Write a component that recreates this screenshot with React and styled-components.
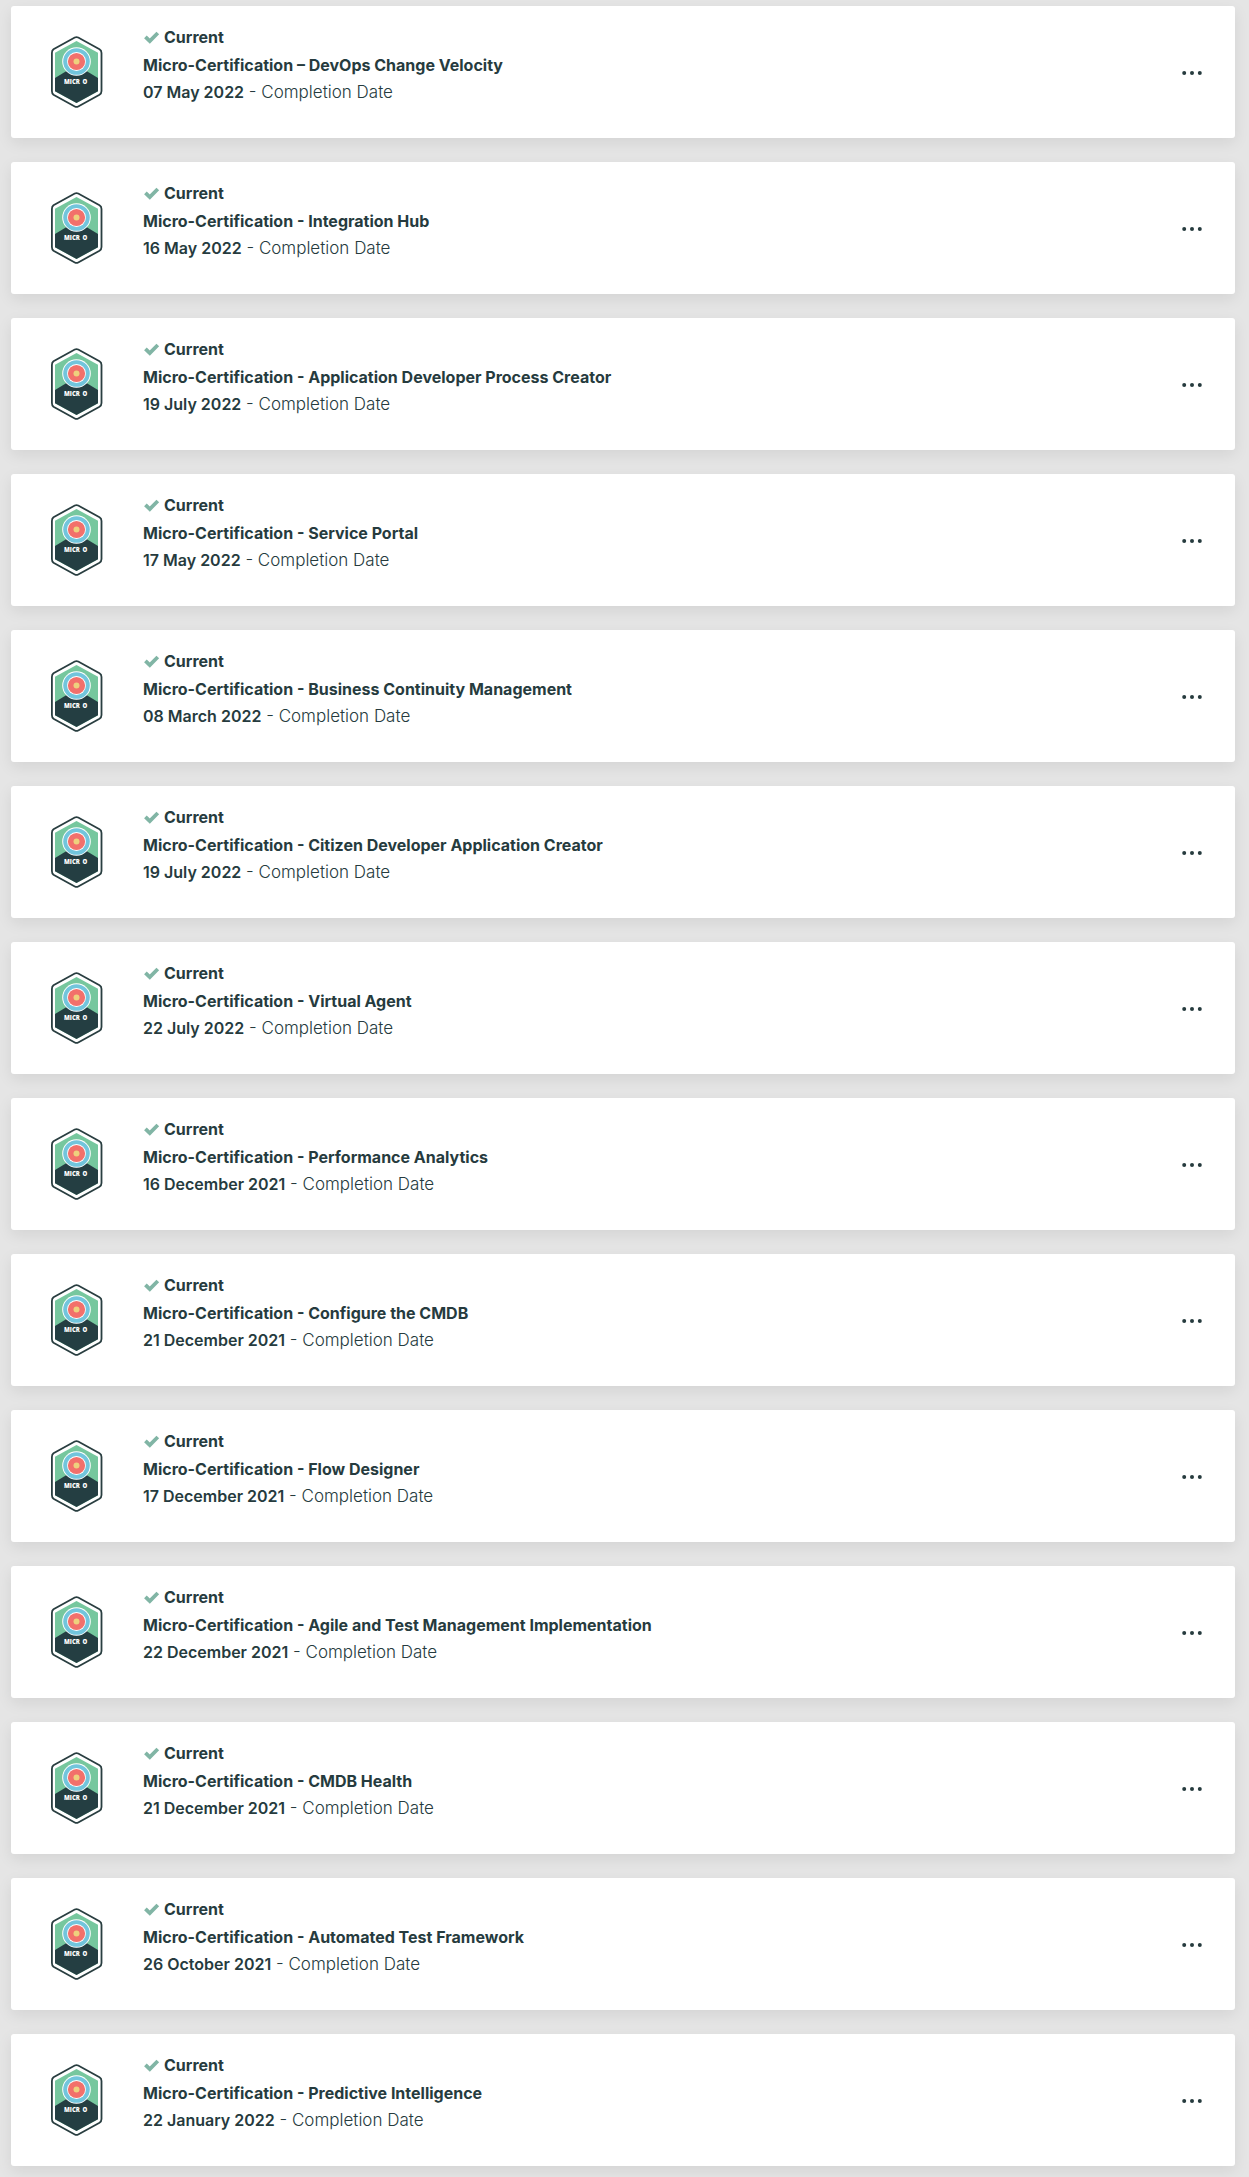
import React from "react";
import styled, { createGlobalStyle } from "styled-components";

const GlobalStyle = createGlobalStyle`
  *, *::before, *::after { box-sizing: border-box; }
  body {
    margin: 0;
    background: #e5e5e5;
    color: #263b3e;
    font-family: Inter, "Liberation Sans", sans-serif;
  }
`;

const List = styled.ul`
  display: flex;
  flex-direction: column;
  gap: 24px;
  margin: 0;
  padding: 6px 14px 11px 11px;
  list-style: none;
`;

const Card = styled.li`
  display: flex;
  align-items: center;
  gap: 40px;
  min-height: 132px;
  padding: 18px 28px 18px 40px;
  border-radius: 3px;
  background: #ffffff;
  box-shadow: 0 5px 15px rgba(0, 0, 0, 0.08);
`;

const BadgeArt = styled.svg`
  flex: none;
  width: 52px;
  height: 72px;
`;

const Details = styled.div`
  display: flex;
  flex: 1;
  flex-direction: column;
  align-self: flex-start;
  min-width: 0;
  font-size: 16px;
  line-height: 27px;
`;

const Status = styled.div`
  display: flex;
  align-items: flex-start;
  gap: 4px;
  height: 28px;
  font-weight: 700;
`;

const CheckMark = styled.svg`
  flex: none;
  width: 17px;
  height: 27px;
`;

const Title = styled.h3`
  margin: 0;
  font-size: 16px;
  font-weight: 700;
`;

const Completion = styled.p`
  margin: 0;
  font-size: 17px;
  font-weight: 300;
`;

const CompletedOn = styled.time`
  font-size: 16px;
  font-weight: 600;
`;

const MenuButton = styled.button`
  display: flex;
  flex: none;
  align-items: flex-end;
  justify-content: center;
  width: 30px;
  height: 30px;
  padding: 0 0 12px;
  border: 0;
  background: transparent;
  color: #263b3e;
  cursor: pointer;
`;

const certifications = [
  { title: "Micro-Certification – DevOps Change Velocity", date: "07 May 2022" },
  { title: "Micro-Certification - Integration Hub", date: "16 May 2022" },
  { title: "Micro-Certification - Application Developer Process Creator", date: "19 July 2022" },
  { title: "Micro-Certification - Service Portal", date: "17 May 2022" },
  { title: "Micro-Certification - Business Continuity Management", date: "08 March 2022" },
  { title: "Micro-Certification - Citizen Developer Application Creator", date: "19 July 2022" },
  { title: "Micro-Certification - Virtual Agent", date: "22 July 2022" },
  { title: "Micro-Certification - Performance Analytics", date: "16 December 2021" },
  { title: "Micro-Certification - Configure the CMDB", date: "21 December 2021" },
  { title: "Micro-Certification - Flow Designer", date: "17 December 2021" },
  { title: "Micro-Certification - Agile and Test Management Implementation", date: "22 December 2021" },
  { title: "Micro-Certification - CMDB Health", date: "21 December 2021" },
  { title: "Micro-Certification - Automated Test Framework", date: "26 October 2021" },
  { title: "Micro-Certification - Predictive Intelligence", date: "22 January 2022" },
];

function Badge() {
  return (
    <BadgeArt viewBox="0 0 52 72" aria-hidden="true">
      <path
        d="M23.8 1.5Q25.5 .6 27.2 1.5L48.5 13.3Q50.5 14.5 50.5 17V55Q50.5 57.5 48.5 58.7L27.2 70.5Q25.5 71.4 23.8 70.5L2.5 58.7Q.9 57.5 .9 55V17Q.9 14.5 2.5 13.3Z"
        fill="#ffffff"
        stroke="#293e40"
        strokeWidth="1.8"
      />
      <path d="M25.5 5L47 16.8V55.2L25.5 67L4 55.2V16.8Z" fill="#76c79e" />
      <path d="M4 42L25.5 29L47 42V55.2L25.5 67L4 55.2Z" fill="#243e42" />
      <circle cx="25.5" cy="25.5" r="14.3" fill="#ffffff" />
      <circle cx="25.5" cy="25.5" r="13.3" fill="#72c5dc" />
      <circle cx="25.5" cy="25.5" r="9.4" fill="#ffffff" />
      <circle cx="25.5" cy="25.5" r="8.6" fill="#f2706b" />
      <circle cx="25.5" cy="25.5" r="3" fill="#eed17d" />
      <g fill="#ffffff" fontFamily="Open Sans, sans-serif" fontSize="6" fontWeight="800">
        <text x="13" y="48">MICR</text>
        <text x="31.5" y="48">O</text>
      </g>
    </BadgeArt>
  );
}

function Certification({ title, date }) {
  return (
    <Card>
      <Badge />
      <Details>
        <Status>
          <CheckMark viewBox="0 0 17 27" aria-hidden="true">
            <path d="M2.4 12.8L6.8 17L14.8 9" fill="none" stroke="#81b5a5" strokeWidth="3.8" />
          </CheckMark>
          Current
        </Status>
        <Title>{title}</Title>
        <Completion>
          <CompletedOn>{date}</CompletedOn> - Completion Date
        </Completion>
      </Details>
      <MenuButton type="button" aria-label={`More options for ${title}`}>
        <svg width="20" height="4" viewBox="0 0 20 4" fill="currentColor" aria-hidden="true">
          <circle cx="2.2" cy="2" r="2" />
          <circle cx="10" cy="2" r="2" />
          <circle cx="17.8" cy="2" r="2" />
        </svg>
      </MenuButton>
    </Card>
  );
}

export default function App() {
  return (
    <>
      <GlobalStyle />
      <List>
        {certifications.map((item) => (
          <Certification key={item.title} {...item} />
        ))}
      </List>
    </>
  );
}
